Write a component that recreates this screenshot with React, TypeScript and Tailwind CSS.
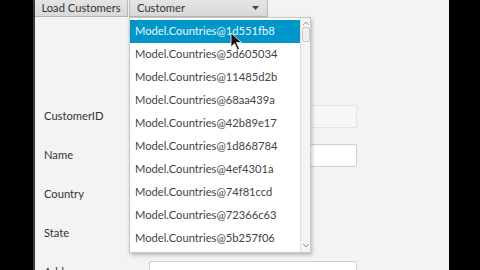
import React from "react";

const items = [
  "Model.Countries@1d551fb8",
  "Model.Countries@5d605034",
  "Model.Countries@11485d2b",
  "Model.Countries@68aa439a",
  "Model.Countries@42b89e17",
  "Model.Countries@1d868784",
  "Model.Countries@4ef4301a",
  "Model.Countries@74f81ccd",
  "Model.Countries@72366c63",
  "Model.Countries@5b257f06",
];

const fields = [
  { label: "CustomerID", input: "disabled" },
  { label: "Name", input: "normal" },
  { label: "Country", input: "none" },
  { label: "State", input: "none" },
  { label: "Address", input: "normal" },
];

export default function App() {
  return (
    <div
      className="flex h-[270px] w-[480px] overflow-hidden bg-black text-[11.2px] text-[#333]"
      style={{ fontFamily: 'Lato, "Noto Sans", sans-serif' }}
    >
      <div className="w-[33px] shrink-0 bg-black" />
      <div className="w-[2px] shrink-0 bg-[#3a3a3a]" />
      <div className="relative w-[414px] shrink-0 bg-[#f3f3f3]">
        {/* toolbar */}
        <div className="flex h-[17px] items-stretch">
          <div className="flex w-[93px] items-center justify-center border-b border-r border-[#b8b8b8] bg-gradient-to-b from-[#e4e4e4] to-[#d9d9d9] pb-[1px] leading-none text-[#333]">
            Load Customers
          </div>
          <div className="ml-[1px] flex w-[139px] items-center justify-between border-b border-l border-r border-[#b8b8b8] bg-gradient-to-b from-[#e4e4e4] to-[#d9d9d9] pl-[7px] pr-[8px] pb-[1px] leading-none">
            <span>Customer</span>
            <svg width="7" height="4" viewBox="0 0 7 4">
              <path d="M0 0 L7 0 L3.5 4 Z" fill="#444" />
            </svg>
          </div>
        </div>

        {/* form */}
        <div className="mt-[88px] flex flex-col gap-[16px] pl-[9px]">
          {fields.map((f) => (
            <div key={f.label} className="flex h-[23px] items-center">
              <span className="w-[105px]">{f.label}</span>
              {f.input === "disabled" && (
                <div className="h-[23px] w-[208px] rounded-[2px] border border-[#e4e4e4] bg-[#f7f7f7]" />
              )}
              {f.input === "normal" && (
                <div className="h-[23px] w-[208px] rounded-[2px] border border-[#cfcfcf] bg-white" />
              )}
            </div>
          ))}
        </div>

        {/* dropdown list */}
        <div className="absolute left-[94px] top-[17px] flex h-[236px] w-[182px] border border-[#c8c8c8] bg-white shadow-[1px_2px_4px_rgba(0,0,0,0.25)]">
          <div className="flex flex-1 flex-col pt-[2px]">
            {items.map((it, i) => (
              <div
                key={it}
                className={
                  i === 0
                    ? "flex h-[23px] items-center bg-[#0096c9] pl-[5px] text-[#eaf7fc]"
                    : "flex h-[23px] items-center pl-[5px] text-[#444]"
                }
              >
                {it}
              </div>
            ))}
          </div>
          <div className="flex w-[10px] flex-col items-center border-l border-[#e0e0e0] bg-[#f4f4f4] pt-[2px]">
            <svg width="8" height="6" viewBox="0 0 8 6">
              <path d="M1 5 L4 2 L7 5" stroke="#999" strokeWidth="1" fill="none" />
            </svg>
            <div className="mt-[1px] h-[15px] w-[8px] rounded-[2px] border border-[#c8c8c8] bg-[#efefef]" />
            <div className="flex-1" />
            <svg width="8" height="6" viewBox="0 0 8 6" className="mb-[3px]">
              <path d="M1 1 L4 4 L7 1" stroke="#999" strokeWidth="1" fill="none" />
            </svg>
          </div>
        </div>

        {/* mouse pointer */}
        <svg
          className="absolute left-[195px] top-[32px]"
          width="14"
          height="20"
          viewBox="0 0 14 20"
        >
          <path d="M1 1 L1 15 L4.5 11.5 L7.5 18 L9.5 17 L6.5 10.5 L11.5 10.5 Z" fill="#111" stroke="#fff" strokeWidth="0.8" />
        </svg>
      </div>
      <div className="flex-1 bg-black" />
    </div>
  );
}
